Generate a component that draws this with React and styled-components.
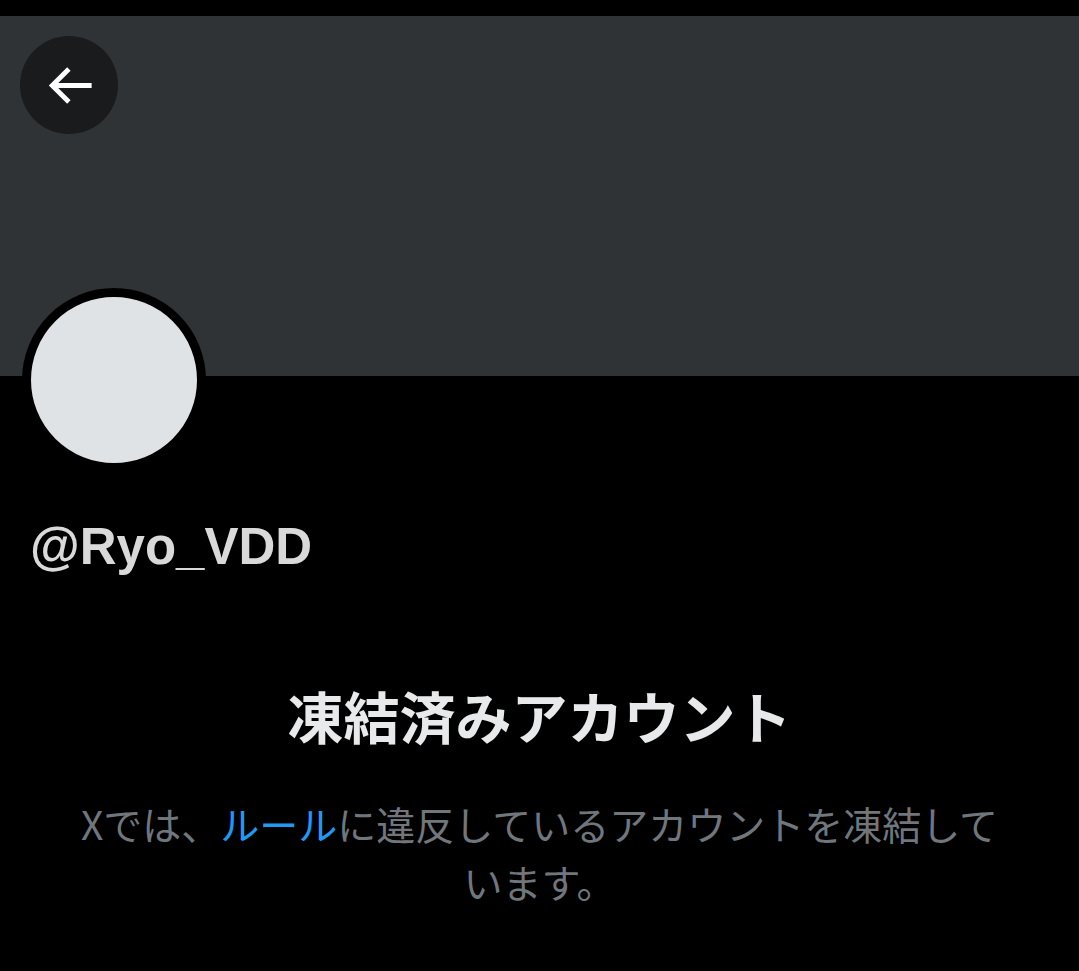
import styled, { createGlobalStyle } from 'styled-components';

const GlobalStyle = createGlobalStyle`
    html, body {
        margin: 0;
        padding: 0;
        background: #000000;
    }
    body {
        font-family: Roboto, "Noto Sans CJK JP", sans-serif;
        -webkit-font-smoothing: antialiased;
    }
`;

function BackIcon() {
    return (
        <svg width="59" height="59" viewBox="0 0 24 24" fill="#ffffff">
            <path d="M7.414 13l5.043 5.04-1.414 1.42L3.586 12l7.457-7.46 1.414 1.42L7.414 11H21v2H7.414z" />
        </svg>
    );
}

export default function App() {
    return (
        <>
            <GlobalStyle />
            <Page>
                <StatusStrip />
                <Banner>
                    <BackButton aria-label="戻る">
                        <BackIcon />
                    </BackButton>
                </Banner>
                <Profile>
                    <Avatar />
                    <Handle>@Ryo_VDD</Handle>
                </Profile>
                <Notice>
                    <Title>凍結済みアカウント</Title>
                    <Body>
                        Xでは、<RuleLink href="#">ルール</RuleLink>に違反しているアカウントを凍結しています。
                    </Body>
                </Notice>
            </Page>
        </>
    );
}

const Page = styled.div`
    width: 1079px;
    min-height: 971px;
    background: #000000;
    display: flex;
    flex-direction: column;
    overflow: hidden;
`;

const StatusStrip = styled.div`
    height: 16px;
    background: #000000;
`;

const Banner = styled.div`
    position: relative;
    height: 360px;
    background: #2f3336;
`;

const BackButton = styled.button`
    position: absolute;
    top: 20px;
    left: 20px;
    width: 98px;
    height: 98px;
    border: none;
    border-radius: 50%;
    background: #191b1d;
    display: flex;
    align-items: center;
    justify-content: center;
    padding: 0;
    cursor: pointer;
`;

const Profile = styled.div`
    display: flex;
    flex-direction: column;
    align-items: flex-start;
    padding: 0 30px;
`;

const Avatar = styled.div`
    width: 166px;
    height: 166px;
    margin: -88px 0 0 -8px;
    border: 9px solid #000000;
    border-radius: 50%;
    background: #dfe3e6;
    position: relative;
`;

const Handle = styled.div`
    margin-top: 47px;
    font-family: "Liberation Sans", Arial, sans-serif;
    font-weight: 700;
    font-size: 51px;
    line-height: 56px;
    color: #d9d9d9;
`;

const Notice = styled.div`
    display: flex;
    flex-direction: column;
    align-items: center;
    padding: 105px 68px 0;
    text-align: center;
`;

const Title = styled.h1`
    margin: 0;
    font-family: "Noto Sans CJK JP", sans-serif;
    font-weight: 700;
    font-size: 56px;
    line-height: 70px;
    color: #e7e9ea;
`;

const Body = styled.p`
    margin: 44px 0 0;
    font-family: "Noto Sans CJK JP", sans-serif;
    font-weight: 400;
    font-size: 39px;
    line-height: 58px;
    color: #71767b;
`;

const RuleLink = styled.a`
    color: #1d9bf0;
    text-decoration: none;
`;
